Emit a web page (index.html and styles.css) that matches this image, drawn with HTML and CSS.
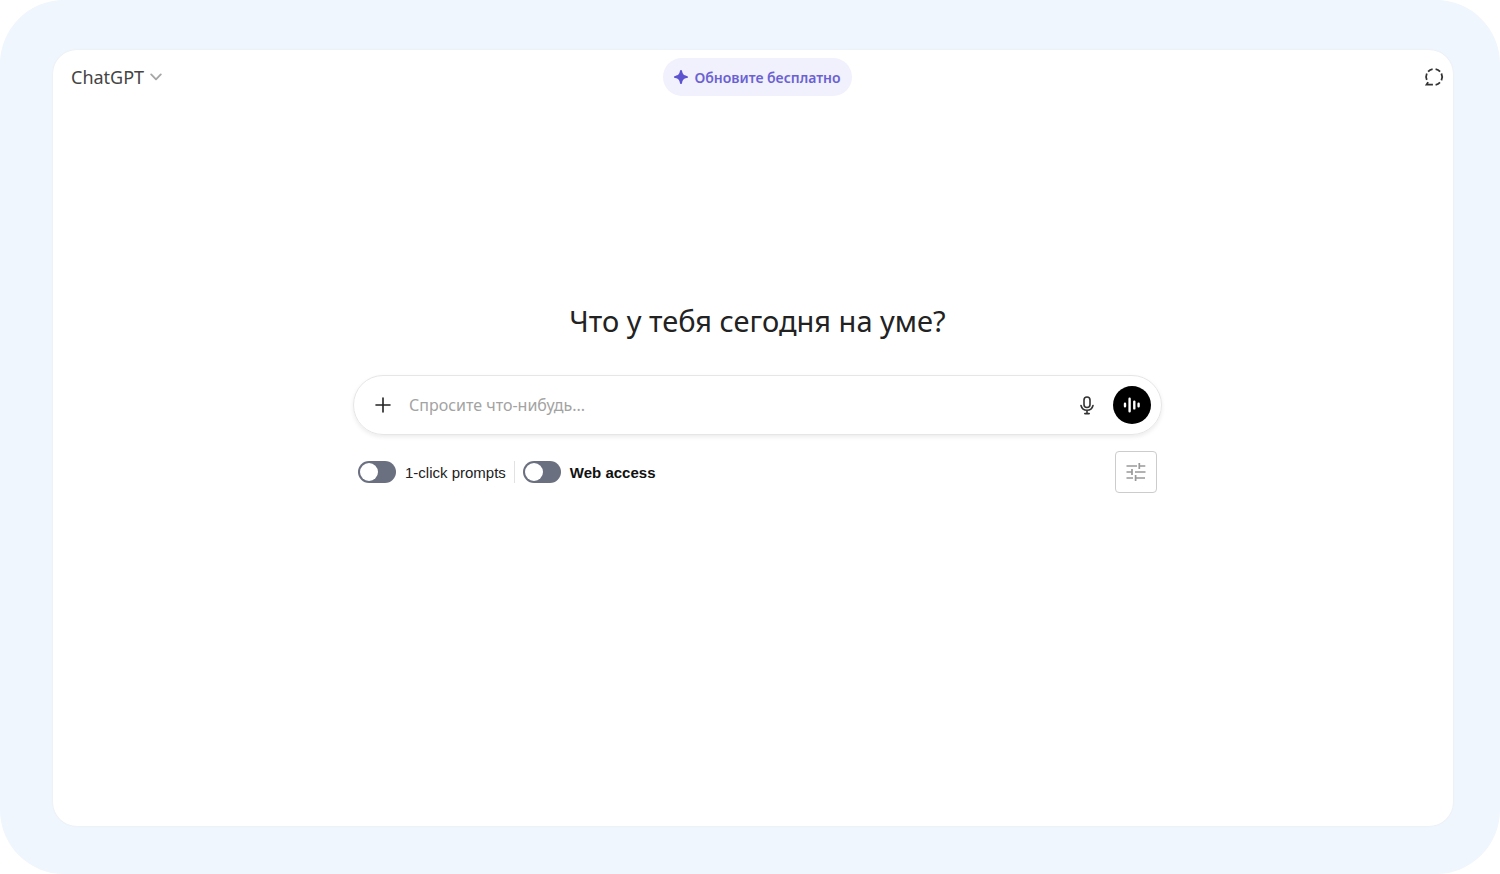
FILE: index.html
```html
<!DOCTYPE html>
<html lang="ru">
<head>
  <meta charset="UTF-8" />
  <meta name="viewport" content="width=device-width, initial-scale=1" />
  <title>ChatGPT</title>
  <link rel="stylesheet" href="styles.css">
</head>
<body>

  <div class="frame">
    <div class="window">

      <header class="topbar">
        <button class="model-btn" type="button">
          ChatGPT
          <svg width="12" height="8" viewBox="0 0 12 8" fill="none" stroke="#a6a6a6" stroke-width="1.8" stroke-linecap="round" stroke-linejoin="round"><path d="M1.2 1.4 6 6.4l4.8-5"/></svg>
        </button>

        <button class="upgrade-btn" type="button">
          <svg width="14" height="14" viewBox="0 0 14 14" fill="#5b53cf"><path d="M7 0c.7 0 .9.6 1.1 1.3C8.8 4.3 9.7 5.2 12.7 5.900c.7.200 1.300.4 1.300 1.100s-.6.900-1.300 1.100c-3 .7-3.900 1.600-4.600 4.600C7.900 13.400 7.700 14 7 14s-.9-.6-1.100-1.300c-.7-3-1.600-3.900-4.600-4.600C.6 7.900 0 7.700 0 7s.6-.9 1.300-1.100c3-.7 3.900-1.600 4.600-4.600C6.100.6 6.300 0 7 0z"/></svg>
          Обновите бесплатно
        </button>

        <button class="temp-btn" type="button" aria-label="Временный чат">
          <svg width="20" height="20" viewBox="0 0 20 20" fill="none" stroke="#333" stroke-width="1.800">
            <path d="M11.600 2.200a8 8 0 0 1 4.500 2.500M17.400 6.500a8 8 0 0 1 0 6.800M16 15.400a8 8 0 0 1-4.400 2.400M8.600 2.200a8 8 0 0 0-4.500 2.500M2.800 6.500a8 8 0 0 0 0 6.300M8.900 17.700H2.500l1.600-2.600"/>
          </svg>
        </button>
      </header>

      <main>
        <h1>Что у тебя сегодня на уме?</h1>

        <form class="composer">
          <button class="icon-btn" type="button" aria-label="Добавить">
            <svg width="16" height="16" viewBox="0 0 16 16" fill="none" stroke="#222" stroke-width="1.6" stroke-linecap="round"><path d="M8 1v14M1 8h14"/></svg>
          </button>
          <input class="prompt" type="text" placeholder="Спросите что-нибудь..." aria-label="Сообщение" />
          <button class="icon-btn" type="button" aria-label="Диктовка">
            <svg width="14" height="19" viewBox="0 0 14 19" fill="none" stroke="#333" stroke-width="1.6" stroke-linecap="round">
              <rect x="4" y="1" width="6" height="10.5" rx="3"/>
              <path d="M1 9.5c.7 2.900 3 4.800 6 4.800s5.300-1.900 6-4.800M7 14.500v3M4.800 17.600h4.400"/>
            </svg>
          </button>
          <button class="voice-btn" type="button" aria-label="Голосовой режим">
            <svg width="18" height="16" viewBox="0 0 18 16" fill="none" stroke="#fff" stroke-width="2.400" stroke-linecap="round"><path d="M2 6.800v2.400M6.600 1.800v12.400M11.300 4.600v6.800M15.600 6.800v2.400"/></svg>
          </button>
        </form>

        <div class="options">
          <label class="switch">
            <input type="checkbox" />
            1-click prompts
          </label>
          <span class="divider"></span>
          <label class="switch bold">
            <input type="checkbox" />
            Web access
          </label>
          <button class="settings-btn" type="button" aria-label="Настройки">
            <svg width="20" height="20" viewBox="0 0 20 20" fill="none" stroke="#999" stroke-width="1.700">
              <path d="M.5 4H11M13.300 4h6M13.300 1v6M.5 10H6M9 10h10.500M6 7v6M.5 16H7M9.600 16H19M9.600 13v6"/>
            </svg>
          </button>
        </div>
      </main>

    </div>
  </div>

</body>
</html>
```

FILE: styles.css
```css
/* Base reset and fonts */
* {
  margin: 0; padding: 0; box-sizing: border-box;
}
body {
  font-family: 'Noto Sans', 'Open Sans', sans-serif;
  background: #fff;
  color: #222;
}
button {
  border: none;
  background: none;
  font-family: inherit;
  color: inherit;
  cursor: pointer;
}
svg {
  display: block;
  flex-shrink: 0;
}

/* Rounded backdrop and window */
.frame {
  min-height: 100vh;
  display: flex;
  padding: 50px 47px 48px 53px;
  background: #f0f6fd;
  border-radius: 64px;
}
.window {
  flex-grow: 1;
  display: flex;
  flex-direction: column;
  padding: 8px 9px 8px 18px;
  background: #fff;
  border-radius: 24px;
  box-shadow: 0 0 2px #e4e8ec;
}

/* Top bar */
.topbar {
  display: grid;
  grid-template-columns: 1fr auto 1fr;
  align-items: center;
}
.model-btn {
  justify-self: start;
  display: flex;
  align-items: center;
  gap: 6px;
  font-size: 18px;
  color: #444;
}
.upgrade-btn {
  display: flex;
  align-items: center;
  gap: 6px;
  height: 38px;
  padding: 0 11px;
  border-radius: 19px;
  background: #f1f0fd;
  color: #6a62d2;
  font-size: 14px;
  font-weight: 600;
}
.temp-btn {
  justify-self: end;
}

/* Prompt area */
main {
  width: 100%;
  max-width: 809px;
  margin: 0 auto;
  padding-top: 204px;
}
h1 {
  margin-bottom: 33px;
  font-size: 29px;
  font-weight: 400;
  line-height: 42px;
  text-align: center;
}
.composer {
  display: flex;
  align-items: center;
  height: 60px;
  padding: 0 10px 0 15px;
  border: 1px solid #e6e6e6;
  border-radius: 30px;
  box-shadow: 0 2px 4px rgba(0, 0, 0, 0.08);
}
.icon-btn {
  width: 28px;
  height: 36px;
  display: flex;
  align-items: center;
  justify-content: center;
}
.prompt {
  flex-grow: 1;
  min-width: 0;
  margin: 0 12px;
  border: none;
  outline: none;
  background: none;
  font-family: inherit;
  font-size: 16px;
  color: #222;
}
.prompt::placeholder {
  color: #a3a3a3;
}
.voice-btn {
  width: 38px;
  height: 38px;
  margin-left: 12px;
  display: flex;
  align-items: center;
  justify-content: center;
  border-radius: 50%;
  background: #000;
}

/* Switches under the prompt */
.options {
  display: flex;
  align-items: center;
  padding: 16px 5px 0;
  font-family: 'Liberation Sans', Arial, sans-serif;
  font-size: 15px;
}
.switch {
  display: flex;
  align-items: center;
  gap: 9px;
  cursor: pointer;
}
.switch.bold {
  font-weight: bold;
  color: #111;
}
.switch input {
  appearance: none;
  width: 38px;
  height: 22px;
  padding: 2px;
  border-radius: 11px;
  background: #6b7080;
  cursor: pointer;
}
.switch input::before {
  content: '';
  display: block;
  width: 18px;
  height: 18px;
  border-radius: 50%;
  background: #fff;
}
.switch input:checked::before {
  margin-left: auto;
}
.divider {
  width: 1px;
  height: 22px;
  margin: 0 8px;
  background: #e2e2e2;
}
.settings-btn {
  width: 42px;
  height: 42px;
  margin-left: auto;
  display: flex;
  align-items: center;
  justify-content: center;
  border: 1px solid #ccc;
  border-radius: 4px;
}
```
